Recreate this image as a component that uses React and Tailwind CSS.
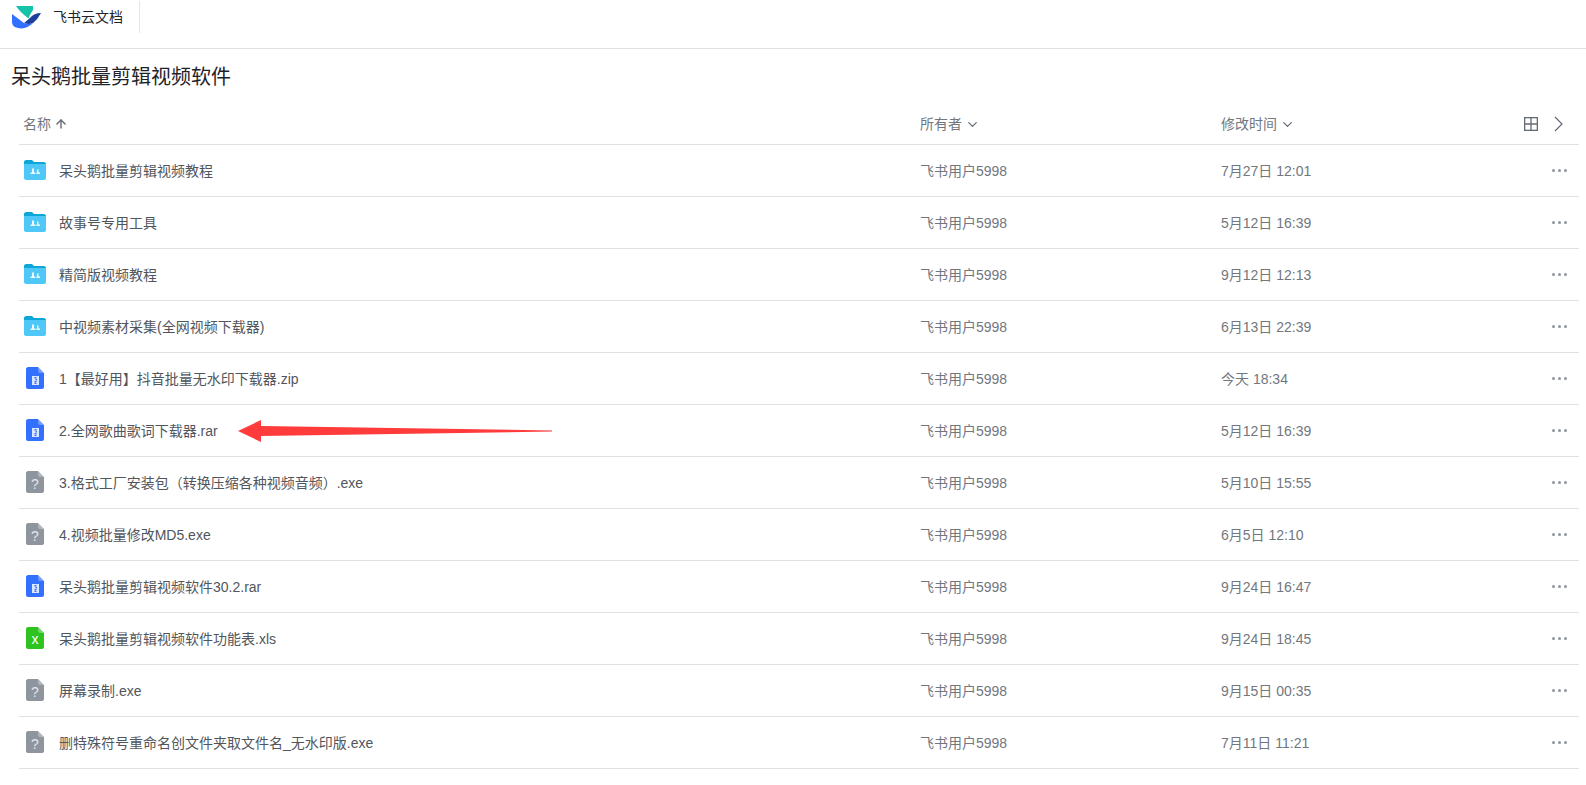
import React from "react";
import { ArrowUp, ChevronDown } from "lucide-react";

const FONT = "font-['Liberation_Sans','Noto_Sans_CJK_SC',sans-serif]";

const rows = [
  { type: "folder", name: "呆头鹅批量剪辑视频教程", time: "7月27日 12:01" },
  { type: "folder", name: "故事号专用工具", time: "5月12日 16:39" },
  { type: "folder", name: "精简版视频教程", time: "9月12日 12:13" },
  { type: "folder", name: "中视频素材采集(全网视频下载器)", time: "6月13日 22:39" },
  { type: "zip", name: "1【最好用】抖音批量无水印下载器.zip", time: "今天 18:34" },
  { type: "zip", name: "2.全网歌曲歌词下载器.rar", time: "5月12日 16:39", arrow: true },
  { type: "unknown", name: "3.格式工厂安装包（转换压缩各种视频音频）.exe", time: "5月10日 15:55" },
  { type: "unknown", name: "4.视频批量修改MD5.exe", time: "6月5日 12:10" },
  { type: "zip", name: "呆头鹅批量剪辑视频软件30.2.rar", time: "9月24日 16:47" },
  { type: "excel", name: "呆头鹅批量剪辑视频软件功能表.xls", time: "9月24日 18:45" },
  { type: "unknown", name: "屏幕录制.exe", time: "9月15日 00:35" },
  { type: "unknown", name: "删特殊符号重命名创文件夹取文件名_无水印版.exe", time: "7月11日 11:21" },
];

function Logo() {
  return (
    <svg width="30" height="23" viewBox="0 0 30 23">
      <path d="M4 0H21V4Q18.5 7 16.5 12.5C12 9 7 5 4 0Z" fill="#14c4a8" />
      <path d="M29 7Q22 7 18 12L12 17Q17 19 21 17Q26 13 29 7Z" fill="#1f3f9e" />
      <path d="M0 8L12 17Q17 19 21 17Q14 24 6 22Q0 21 0 16Z" fill="#3370ff" />
    </svg>
  );
}

function FolderIcon() {
  return (
    <svg width="22" height="20" viewBox="0 0 22 20">
      <path d="M0 2C0 1 1 0 2 0H8L10 2H20C21 2 22 3 22 4V6H0Z" fill="#0ea5d9" />
      <path d="M0 4H22V18C22 19 21 20 20 20H2C1 20 0 19 0 18Z" fill="#4fc8f8" />
      <path d="M8 8.5H10V12.5H11.5V14H6.5V12.5H8ZM13 9.5H14.5V12.5H16V14H12.5V12.5H13Z" fill="#fff" fillOpacity="0.9" />
    </svg>
  );
}

function FileIcon({ color, children }) {
  return (
    <div className="relative w-[18px] h-[22px]">
      <svg width="18" height="22" viewBox="0 0 18 22" className="absolute inset-0">
        <path d="M2 0H12L18 6V20C18 21 17 22 16 22H2C1 22 0 21 0 20V2C0 1 1 0 2 0Z" fill={color} />
        <path d="M12 0L18 6H14C13 6 12 5 12 4Z" fill="#fff" fillOpacity="0.3" />
      </svg>
      {children}
    </div>
  );
}

function RowIcon({ type }) {
  if (type === "folder") return <FolderIcon />;
  if (type === "zip")
    return (
      <FileIcon color="#3370ff">
        <svg width="18" height="22" viewBox="0 0 18 22" className="absolute inset-0">
          <rect x="6" y="9" width="7" height="9" fill="#dbe6ff" />
          <path d="M8.5 10H10.5V11.5H8.5ZM9.5 12H11V13.5H9.5ZM8.5 14H10.5V15H8.5ZM8.5 15.5H10.5V17H8.5Z" fill="#3370ff" />
        </svg>
      </FileIcon>
    );
  if (type === "excel")
    return (
      <FileIcon color="#2fc31f">
        <span className="absolute inset-0 pt-[4px] text-center text-[14px] leading-[16px] text-white">x</span>
      </FileIcon>
    );
  return (
    <FileIcon color="#8f959e">
      <span className="absolute inset-0 pt-[5px] text-center text-[14px] leading-[16px] text-[#e4e6ea]">?</span>
    </FileIcon>
  );
}

function GridIcon() {
  return (
    <svg width="14" height="14" viewBox="0 0 14 14" fill="none" stroke="#646a73" strokeWidth="1.3">
      <rect x="0.65" y="0.65" width="12.7" height="12.7" />
      <path d="M7 1V13M1 7H13" />
    </svg>
  );
}

function RightChevron() {
  return (
    <svg width="9" height="16" viewBox="0 0 9 16" fill="none" stroke="#646a73" strokeWidth="1.2">
      <path d="M1 1L8 8L1 15" />
    </svg>
  );
}

function Arrow() {
  return (
    <svg width="314" height="24" viewBox="0 0 314 24" className="absolute left-[219px] top-[14px]">
      <path d="M0 12L23 1V7L314 11.5V12.5L23 17V23Z" fill="#ff3b3b" />
    </svg>
  );
}

function Row({ row }) {
  return (
    <div className="relative flex h-[52px] items-center border-b border-[#dee0e3] text-[14px]">
      <div className="mr-[8px] flex w-[32px] justify-center pb-[2px]">
        <RowIcon type={row.type} />
      </div>
      <div className="w-[861px] pt-[1px] text-[#51565d]">{row.name}</div>
      <div className="w-[301px] pt-[1px] text-[#72777e]">飞书用户5998</div>
      <div className="flex-1 pt-[1px] text-[#72777e]">{row.time}</div>
      <div className="flex w-[44px] justify-center gap-[3px] pl-[4px]">
        <span className="h-[3px] w-[3px] rounded-full bg-[#8f959e]" />
        <span className="h-[3px] w-[3px] rounded-full bg-[#8f959e]" />
        <span className="h-[3px] w-[3px] rounded-full bg-[#8f959e]" />
      </div>
      {row.arrow && <Arrow />}
    </div>
  );
}

export default function App() {
  return (
    <div className={`${FONT} h-[785px] w-[1586px] overflow-hidden bg-white`}>
      <header className="flex h-[49px] items-start border-b border-[#dee0e3]">
        <div className="ml-[12px] mt-[6px]">
          <Logo />
        </div>
        <span className="ml-[11px] mt-[8px] text-[14px] leading-[19px] text-[#1f2329]">飞书云文档</span>
        <div className="ml-[16px] mt-[1px] h-[32px] w-px bg-[#e4e5e8]" />
      </header>
      <h1 className="ml-[11px] mt-[15px] text-[20px] leading-[26px] text-[#1f2329]">呆头鹅批量剪辑视频软件</h1>
      <div className="ml-[19px] w-[1560px]">
        <div className="mt-[14px] flex h-[41px] items-center border-b border-[#dee0e3] text-[14px] text-[#72777e]">
          <div className="flex w-[901px] items-center gap-[3px] pl-[4px]">
            名称 <ArrowUp size={14} strokeWidth={2.4} className="text-[#646a73]" />
          </div>
          <div className="flex w-[301px] items-center gap-[3px]">
            所有者 <ChevronDown size={15} strokeWidth={2} className="text-[#646a73]" />
          </div>
          <div className="flex flex-1 items-center gap-[3px]">
            修改时间 <ChevronDown size={15} strokeWidth={2} className="text-[#646a73]" />
          </div>
          <div className="flex items-center gap-[16px] pr-[16px]">
            <GridIcon />
            <RightChevron />
          </div>
        </div>
        {rows.map((r) => (
          <Row key={r.name} row={r} />
        ))}
      </div>
    </div>
  );
}
